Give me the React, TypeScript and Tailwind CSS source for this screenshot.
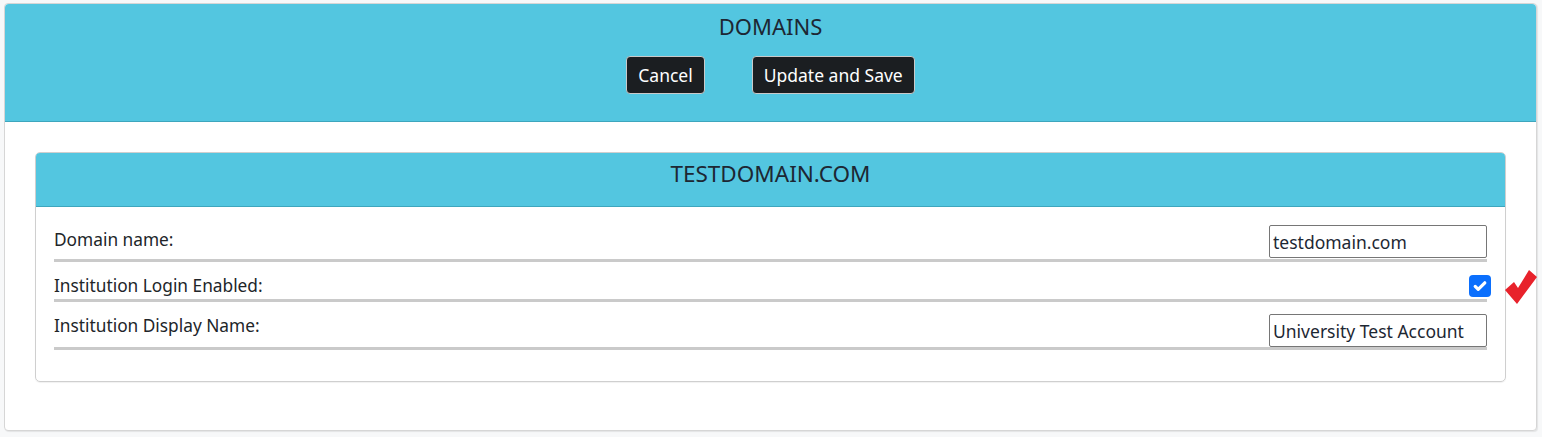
export default function App() {
  const font = { fontFamily: '"Noto Sans", "Open Sans", sans-serif' };
  return (
    <div className="min-h-[437px] bg-[#f7f8f9] pt-[3px] pl-[4px] pr-[5px]" style={font}>
      <div className="bg-white border border-[#d6d6d6] rounded-[4px] shadow-[1px_1px_1px_rgba(0,0,0,0.08)]">
        <div className="bg-[#53c6e0] border-b border-[#3ea6bd] rounded-t-[4px] h-[118px] flex flex-col items-center pt-[7px]">
          <h1 className="text-[22px] leading-[30px] text-[#1d2733]">DOMAINS</h1>
          <div className="flex gap-[47px] mt-[15px]">
            <button className="h-[38px] px-[11px] bg-[#1b1e21] text-white text-[17.5px] rounded-[4px] border border-[#c9c9c9]">
              Cancel
            </button>
            <button className="h-[38px] px-[11px] bg-[#1b1e21] text-white text-[17.5px] rounded-[4px] border border-[#c9c9c9]">
              Update and Save
            </button>
          </div>
        </div>

        <div className="pt-[30px] px-[30px] pb-[48px]">
          <div className="border border-[#cfcfcf] rounded-[5px] shadow-[0_1px_1px_rgba(0,0,0,0.06)]">
            <div className="bg-[#53c6e0] border-b border-[#3ea6bd] rounded-t-[4px] h-[54px] flex justify-center pt-[6px]">
              <h2 className="text-[22.5px] leading-[30px] text-[#1d2733]">TESTDOMAIN.COM</h2>
            </div>
            <div className="pt-[18px] pl-[18px] pr-[18px] pb-[31px] text-[17.3px] text-[#212529]">
              <div className="flex justify-between items-start border-b-[3px] border-[#cacaca] pb-[1px]">
                <label className="mt-[2px] leading-[26px]">Domain name:</label>
                <input
                  readOnly
                  value="testdomain.com"
                  className="w-[218px] h-[33px] border border-[#767676] rounded-[2px] px-[3px] text-[17.5px] text-[#1d2733]"
                  style={font}
                />
              </div>
              <div className="relative flex justify-between items-start border-b-[3px] border-[#cacaca] h-[40px]">
                <label className="mt-[11px] leading-[26px]">Institution Login Enabled:</label>
                <span className="mt-[13px] -mr-[4px] w-[22px] h-[22px] rounded-[4px] bg-[#0b6ffd] flex items-center justify-center">
                  <svg viewBox="0 0 16 16" className="w-[16px] h-[16px]">
                    <path d="M3.2 8.4l3 3L12.8 4.8" fill="none" stroke="white" strokeWidth="3.2" strokeLinecap="round" strokeLinejoin="round" />
                  </svg>
                </span>
                <svg viewBox="0 0 32 34" className="absolute left-[calc(100%+18px)] top-[8px] w-[32px] h-[34px]">
                  <path d="M0 20 L9 12 L13 18 L24 0 L32 7 L12 34 Z" fill="#e8222b" />
                </svg>
              </div>
              <div className="flex justify-between items-start border-b-[3px] border-[#cacaca] pt-[12px]">
                <label className="-mt-[1px] leading-[26px]">Institution Display Name:</label>
                <input
                  readOnly
                  value="University Test Account"
                  className="w-[218px] h-[33px] border border-[#767676] rounded-[2px] px-[3px] text-[17.5px] text-[#1d2733]"
                  style={font}
                />
              </div>
            </div>
          </div>
        </div>
      </div>
    </div>
  );
}
